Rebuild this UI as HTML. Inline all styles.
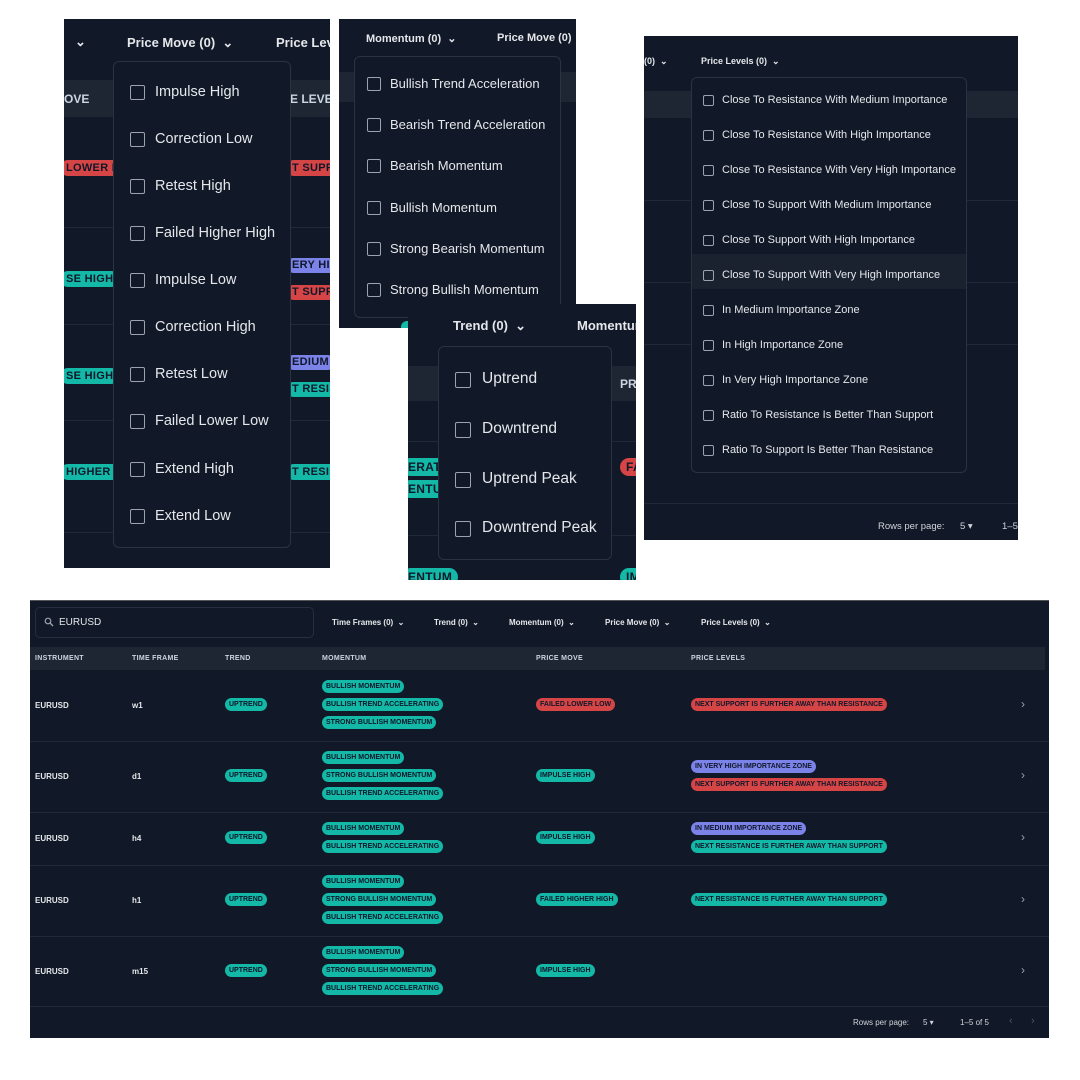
<!DOCTYPE html>
<html><head><meta charset="utf-8">
<style>
*{box-sizing:border-box;margin:0;padding:0}
body{width:1080px;height:1080px;background:#fff;position:relative;overflow:hidden;font-family:"Liberation Sans",sans-serif;color:#e5e7eb}
.p{position:absolute;background:#111827;overflow:hidden}
.a{position:absolute;white-space:nowrap}
.band{position:absolute;background:#1e2633}
.ln{position:absolute;height:1px;background:#1f2a38}
.dd{position:absolute;background:#111827;border:1px solid #2a3342;border-radius:6px}
.cb{position:absolute;border:1.5px solid #9ca3af;border-radius:2px}
.b{position:absolute;white-space:nowrap;border-radius:8px;font-weight:bold;color:#0f172a;letter-spacing:.3px}
.t{background:#14b8a6}.r{background:#d64545}.i{background:#7c83e8}
.f{font-weight:bold;color:#e5e7eb}
.bb{position:absolute;white-space:nowrap;border-radius:7px;font-weight:bold;color:#0f172a;font-size:7px;height:13px;line-height:13px;padding:0 4px;letter-spacing:0}
.h{position:absolute;font-size:7px;font-weight:bold;color:#cbd5e1;letter-spacing:.3px}
.c{position:absolute;font-size:8px;font-weight:bold;color:#e5e7eb}
</style></head><body>

<!-- Panel 1: Price Move -->
<div class="p" style="left:64px;top:19px;width:266px;height:549px">
  <div class="a f" style="left:11px;top:15px;font-size:13px">⌄</div>
  <div class="a f" style="left:63px;top:16px;font-size:13px">Price Move (0) &nbsp;⌄</div>
  <div class="a f" style="left:212px;top:16px;font-size:13px">Price Level</div>
  <div class="band" style="left:0;top:61px;width:266px;height:37px"></div>
  <div class="a f" style="left:0;top:73px;font-size:12px;color:#cbd5e1">OVE</div>
  <div class="a f" style="left:226px;top:73px;font-size:12px;color:#cbd5e1">E LEVEL</div>
  <div class="ln" style="left:0;top:208px;width:266px"></div>
  <div class="ln" style="left:0;top:305px;width:266px"></div>
  <div class="ln" style="left:0;top:401px;width:266px"></div>
  <div class="ln" style="left:0;top:513px;width:266px"></div>
  <div class="b r" style="left:-4px;top:141px;height:16px;line-height:16px;font-size:11px;padding:0 6px">LOWER L</div>
  <div class="b r" style="left:222px;top:141px;height:16px;line-height:16px;font-size:11px;padding:0 6px">T SUPP</div>
  <div class="b t" style="left:-4px;top:252px;height:16px;line-height:16px;font-size:11px;padding:0 6px">SE HIGH</div>
  <div class="b i" style="left:222px;top:239px;height:15px;line-height:15px;font-size:11px;padding:0 6px">ERY HIG</div>
  <div class="b r" style="left:222px;top:266px;height:15px;line-height:15px;font-size:11px;padding:0 6px">T SUPP</div>
  <div class="b t" style="left:-4px;top:349px;height:16px;line-height:16px;font-size:11px;padding:0 6px">SE HIGH</div>
  <div class="b i" style="left:222px;top:336px;height:15px;line-height:15px;font-size:11px;padding:0 6px">EDIUM</div>
  <div class="b t" style="left:222px;top:363px;height:15px;line-height:15px;font-size:11px;padding:0 6px">T RESIS</div>
  <div class="b t" style="left:-4px;top:445px;height:16px;line-height:16px;font-size:11px;padding:0 6px">HIGHER H</div>
  <div class="b t" style="left:222px;top:445px;height:16px;line-height:16px;font-size:11px;padding:0 6px">T RESIS</div>
  <div class="dd" style="left:49px;top:42px;width:178px;height:487px">
    <div class="cb" style="left:16px;top:23px;width:15px;height:15px"></div><div class="a" style="left:41px;top:22px;font-size:14.5px">Impulse High</div>
    <div class="cb" style="left:16px;top:70px;width:15px;height:15px"></div><div class="a" style="left:41px;top:69px;font-size:14.5px">Correction Low</div>
    <div class="cb" style="left:16px;top:117px;width:15px;height:15px"></div><div class="a" style="left:41px;top:116px;font-size:14.5px">Retest High</div>
    <div class="cb" style="left:16px;top:164px;width:15px;height:15px"></div><div class="a" style="left:41px;top:163px;font-size:14.5px">Failed Higher High</div>
    <div class="cb" style="left:16px;top:211px;width:15px;height:15px"></div><div class="a" style="left:41px;top:210px;font-size:14.5px">Impulse Low</div>
    <div class="cb" style="left:16px;top:258px;width:15px;height:15px"></div><div class="a" style="left:41px;top:257px;font-size:14.5px">Correction High</div>
    <div class="cb" style="left:16px;top:305px;width:15px;height:15px"></div><div class="a" style="left:41px;top:304px;font-size:14.5px">Retest Low</div>
    <div class="cb" style="left:16px;top:352px;width:15px;height:15px"></div><div class="a" style="left:41px;top:351px;font-size:14.5px">Failed Lower Low</div>
    <div class="cb" style="left:16px;top:400px;width:15px;height:15px"></div><div class="a" style="left:41px;top:399px;font-size:14.5px">Extend High</div>
    <div class="cb" style="left:16px;top:447px;width:15px;height:15px"></div><div class="a" style="left:41px;top:446px;font-size:14.5px">Extend Low</div>
  </div>
</div>

<!-- Panel 2: Momentum -->
<div class="p" style="left:339px;top:19px;width:237px;height:309px">
  <div class="a f" style="left:27px;top:13px;font-size:11px">Momentum (0) &nbsp;⌄</div>
  <div class="a f" style="left:158px;top:13px;font-size:11px">Price Move (0)</div>
  <div class="band" style="left:0;top:53px;width:237px;height:30px"></div>
  <div class="b t" style="left:62px;top:302px;height:12px;width:30px"></div>
  <div class="dd" style="left:15px;top:37px;width:207px;height:262px">
    <div class="cb" style="left:12px;top:20px;width:14px;height:14px"></div><div class="a" style="left:35px;top:19px;font-size:13px">Bullish Trend Acceleration</div>
    <div class="cb" style="left:12px;top:61px;width:14px;height:14px"></div><div class="a" style="left:35px;top:60px;font-size:13px">Bearish Trend Acceleration</div>
    <div class="cb" style="left:12px;top:102px;width:14px;height:14px"></div><div class="a" style="left:35px;top:101px;font-size:13px">Bearish Momentum</div>
    <div class="cb" style="left:12px;top:144px;width:14px;height:14px"></div><div class="a" style="left:35px;top:143px;font-size:13px">Bullish Momentum</div>
    <div class="cb" style="left:12px;top:185px;width:14px;height:14px"></div><div class="a" style="left:35px;top:184px;font-size:13px">Strong Bearish Momentum</div>
    <div class="cb" style="left:12px;top:226px;width:14px;height:14px"></div><div class="a" style="left:35px;top:225px;font-size:13px">Strong Bullish Momentum</div>
  </div>
</div>

<!-- Panel 3: Trend -->
<div class="p" style="left:408px;top:304px;width:228px;height:276px">
  <div class="a f" style="left:45px;top:14px;font-size:13px">Trend (0) &nbsp;⌄</div>
  <div class="a f" style="left:169px;top:14px;font-size:13px">Momentum</div>
  <div class="band" style="left:0;top:62px;width:228px;height:35px"></div>
  <div class="a f" style="left:212px;top:73px;font-size:12px;color:#cbd5e1">PR</div>
  <div class="ln" style="left:0;top:137px;width:228px"></div>
  <div class="ln" style="left:0;top:231px;width:228px"></div>
  <div class="b t" style="left:-6px;top:154px;height:18px;line-height:18px;font-size:12px;padding:0 6px">ERAT</div>
  <div class="b t" style="left:-6px;top:176px;height:18px;line-height:18px;font-size:12px;padding:0 6px">ENTU</div>
  <div class="b t" style="left:-6px;top:264px;height:18px;line-height:18px;font-size:12px;padding:0 6px;border-radius:9px">ENTUM</div>
  <div class="b r" style="left:212px;top:154px;height:18px;line-height:18px;font-size:12px;padding:0 6px;border-radius:9px">FA</div>
  <div class="b t" style="left:212px;top:264px;height:18px;line-height:18px;font-size:12px;padding:0 6px;border-radius:9px">IM</div>
  <div class="dd" style="left:30px;top:42px;width:174px;height:214px">
    <div class="cb" style="left:16px;top:25px;width:16px;height:16px"></div><div class="a" style="left:43px;top:23px;font-size:15.5px">Uptrend</div>
    <div class="cb" style="left:16px;top:75px;width:16px;height:16px"></div><div class="a" style="left:43px;top:73px;font-size:15.5px">Downtrend</div>
    <div class="cb" style="left:16px;top:125px;width:16px;height:16px"></div><div class="a" style="left:43px;top:123px;font-size:15.5px">Uptrend Peak</div>
    <div class="cb" style="left:16px;top:174px;width:16px;height:16px"></div><div class="a" style="left:43px;top:172px;font-size:15.5px">Downtrend Peak</div>
  </div>
</div>

<!-- Panel 4: Price Levels -->
<div class="p" style="left:644px;top:36px;width:374px;height:504px">
  <div class="a f" style="left:0;top:20px;font-size:9px">(0) &nbsp;⌄</div>
  <div class="a f" style="left:57px;top:20px;font-size:9px">Price Levels (0) &nbsp;⌄</div>
  <div class="band" style="left:0;top:55px;width:374px;height:27px"></div>
  <div class="ln" style="left:0;top:164px;width:374px"></div>
  <div class="ln" style="left:0;top:246px;width:374px"></div>
  <div class="ln" style="left:0;top:308px;width:374px"></div>
  <div class="ln" style="left:0;top:467px;width:374px"></div>
  <div class="a" style="left:234px;top:485px;font-size:9.5px;color:#d1d5db">Rows per page:</div>
  <div class="a" style="left:316px;top:485px;font-size:9.5px;color:#d1d5db">5 ▾</div>
  <div class="a" style="left:358px;top:485px;font-size:9.5px;color:#d1d5db">1–5</div>
  <div class="dd" style="left:47px;top:41px;width:276px;height:396px">
    <div style="position:absolute;left:0;top:176px;width:274px;height:35px;background:#1a2230"></div>
    <div class="cb" style="left:11px;top:17px;width:11px;height:11px"></div><div class="a" style="left:30px;top:16px;font-size:11px">Close To Resistance With Medium Importance</div>
    <div class="cb" style="left:11px;top:52px;width:11px;height:11px"></div><div class="a" style="left:30px;top:51px;font-size:11px">Close To Resistance With High Importance</div>
    <div class="cb" style="left:11px;top:87px;width:11px;height:11px"></div><div class="a" style="left:30px;top:86px;font-size:11px">Close To Resistance With Very High Importance</div>
    <div class="cb" style="left:11px;top:122px;width:11px;height:11px"></div><div class="a" style="left:30px;top:121px;font-size:11px">Close To Support With Medium Importance</div>
    <div class="cb" style="left:11px;top:157px;width:11px;height:11px"></div><div class="a" style="left:30px;top:156px;font-size:11px">Close To Support With High Importance</div>
    <div class="cb" style="left:11px;top:192px;width:11px;height:11px"></div><div class="a" style="left:30px;top:191px;font-size:11px">Close To Support With Very High Importance</div>
    <div class="cb" style="left:11px;top:227px;width:11px;height:11px"></div><div class="a" style="left:30px;top:226px;font-size:11px">In Medium Importance Zone</div>
    <div class="cb" style="left:11px;top:262px;width:11px;height:11px"></div><div class="a" style="left:30px;top:261px;font-size:11px">In High Importance Zone</div>
    <div class="cb" style="left:11px;top:297px;width:11px;height:11px"></div><div class="a" style="left:30px;top:296px;font-size:11px">In Very High Importance Zone</div>
    <div class="cb" style="left:11px;top:332px;width:11px;height:11px"></div><div class="a" style="left:30px;top:331px;font-size:11px">Ratio To Resistance Is Better Than Support</div>
    <div class="cb" style="left:11px;top:367px;width:11px;height:11px"></div><div class="a" style="left:30px;top:366px;font-size:11px">Ratio To Support Is Better Than Resistance</div>
  </div>
</div>

<!-- Bottom table -->
<div class="p" style="left:30px;top:600px;width:1019px;height:438px;border-top:1px solid #555">
  <div style="position:absolute;left:5px;top:6px;width:279px;height:31px;border:1px solid #262f3d;border-radius:5px"></div>
  <svg class="a" style="left:14px;top:16px" width="10" height="10" viewBox="0 0 10 10"><circle cx="4" cy="4" r="2.8" stroke="#9ca3af" stroke-width="1.2" fill="none"/><path d="M6 6L9 9" stroke="#9ca3af" stroke-width="1.3"/></svg>
  <div class="a" style="left:29px;top:16px;font-size:10px;color:#e5e7eb">EURUSD</div>
  <div class="a f" style="left:302px;top:17px;font-size:8px">Time Frames (0) &nbsp;⌄</div>
  <div class="a f" style="left:404px;top:17px;font-size:8px">Trend (0) &nbsp;⌄</div>
  <div class="a f" style="left:479px;top:17px;font-size:8px">Momentum (0) &nbsp;⌄</div>
  <div class="a f" style="left:575px;top:17px;font-size:8px">Price Move (0) &nbsp;⌄</div>
  <div class="a f" style="left:671px;top:17px;font-size:8px">Price Levels (0) &nbsp;⌄</div>
  <div class="band" style="left:0;top:46px;width:1015px;height:23px"></div>
  <div class="h" style="left:5px;top:54px">INSTRUMENT</div>
  <div class="h" style="left:102px;top:54px">TIME FRAME</div>
  <div class="h" style="left:195px;top:54px">TREND</div>
  <div class="h" style="left:292px;top:54px">MOMENTUM</div>
  <div class="h" style="left:506px;top:54px">PRICE MOVE</div>
  <div class="h" style="left:661px;top:54px">PRICE LEVELS</div>

  <div class="ln" style="left:0;top:140px;width:1019px"></div>
  <div class="ln" style="left:0;top:211px;width:1019px"></div>
  <div class="ln" style="left:0;top:264px;width:1019px"></div>
  <div class="ln" style="left:0;top:335px;width:1019px"></div>
  <div class="ln" style="left:0;top:405px;width:1019px"></div>

  <div class="c" style="left:5px;top:100px">EURUSD</div><div class="c" style="left:102px;top:100px">w1</div>
  <div class="bb t" style="left:195px;top:97px">UPTREND</div>
  <div class="bb t" style="left:292px;top:79px">BULLISH MOMENTUM</div>
  <div class="bb t" style="left:292px;top:97px">BULLISH TREND ACCELERATING</div>
  <div class="bb t" style="left:292px;top:115px">STRONG BULLISH MOMENTUM</div>
  <div class="bb r" style="left:506px;top:97px">FAILED LOWER LOW</div>
  <div class="bb r" style="left:661px;top:97px">NEXT SUPPORT IS FURTHER AWAY THAN RESISTANCE</div>
  <div class="a" style="left:991px;top:96px;font-size:12px;color:#9ca3af">›</div>

  <div class="c" style="left:5px;top:171px">EURUSD</div><div class="c" style="left:102px;top:171px">d1</div>
  <div class="bb t" style="left:195px;top:168px">UPTREND</div>
  <div class="bb t" style="left:292px;top:150px">BULLISH MOMENTUM</div>
  <div class="bb t" style="left:292px;top:168px">STRONG BULLISH MOMENTUM</div>
  <div class="bb t" style="left:292px;top:186px">BULLISH TREND ACCELERATING</div>
  <div class="bb t" style="left:506px;top:168px">IMPULSE HIGH</div>
  <div class="bb i" style="left:661px;top:159px">IN VERY HIGH IMPORTANCE ZONE</div>
  <div class="bb r" style="left:661px;top:177px">NEXT SUPPORT IS FURTHER AWAY THAN RESISTANCE</div>
  <div class="a" style="left:991px;top:167px;font-size:12px;color:#9ca3af">›</div>

  <div class="c" style="left:5px;top:233px">EURUSD</div><div class="c" style="left:102px;top:233px">h4</div>
  <div class="bb t" style="left:195px;top:230px">UPTREND</div>
  <div class="bb t" style="left:292px;top:221px">BULLISH MOMENTUM</div>
  <div class="bb t" style="left:292px;top:239px">BULLISH TREND ACCELERATING</div>
  <div class="bb t" style="left:506px;top:230px">IMPULSE HIGH</div>
  <div class="bb i" style="left:661px;top:221px">IN MEDIUM IMPORTANCE ZONE</div>
  <div class="bb t" style="left:661px;top:239px">NEXT RESISTANCE IS FURTHER AWAY THAN SUPPORT</div>
  <div class="a" style="left:991px;top:229px;font-size:12px;color:#9ca3af">›</div>

  <div class="c" style="left:5px;top:295px">EURUSD</div><div class="c" style="left:102px;top:295px">h1</div>
  <div class="bb t" style="left:195px;top:292px">UPTREND</div>
  <div class="bb t" style="left:292px;top:274px">BULLISH MOMENTUM</div>
  <div class="bb t" style="left:292px;top:292px">STRONG BULLISH MOMENTUM</div>
  <div class="bb t" style="left:292px;top:310px">BULLISH TREND ACCELERATING</div>
  <div class="bb t" style="left:506px;top:292px">FAILED HIGHER HIGH</div>
  <div class="bb t" style="left:661px;top:292px">NEXT RESISTANCE IS FURTHER AWAY THAN SUPPORT</div>
  <div class="a" style="left:991px;top:291px;font-size:12px;color:#9ca3af">›</div>

  <div class="c" style="left:5px;top:366px">EURUSD</div><div class="c" style="left:102px;top:366px">m15</div>
  <div class="bb t" style="left:195px;top:363px">UPTREND</div>
  <div class="bb t" style="left:292px;top:345px">BULLISH MOMENTUM</div>
  <div class="bb t" style="left:292px;top:363px">STRONG BULLISH MOMENTUM</div>
  <div class="bb t" style="left:292px;top:381px">BULLISH TREND ACCELERATING</div>
  <div class="bb t" style="left:506px;top:363px">IMPULSE HIGH</div>
  <div class="a" style="left:991px;top:362px;font-size:12px;color:#9ca3af">›</div>

  <div class="a" style="left:823px;top:417px;font-size:8px;color:#d1d5db">Rows per page:</div>
  <div class="a" style="left:893px;top:417px;font-size:8px;color:#d1d5db">5 ▾</div>
  <div class="a" style="left:930px;top:417px;font-size:8px;color:#d1d5db">1–5 of 5</div>
  <div class="a" style="left:979px;top:414px;font-size:11px;color:#4b5563">‹</div>
  <div class="a" style="left:1001px;top:414px;font-size:11px;color:#4b5563">›</div>
</div>
</body></html>
